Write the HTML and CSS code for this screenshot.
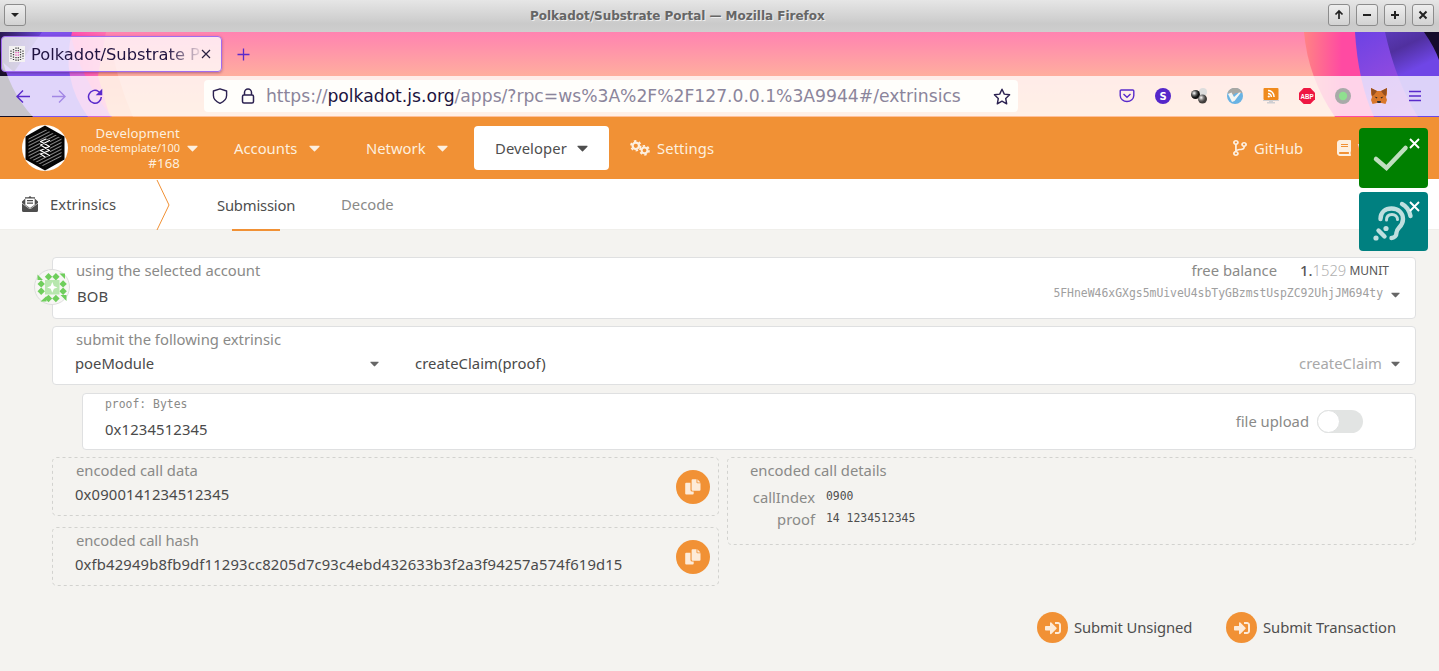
FILE: index.html
```html
<!DOCTYPE html>
<html lang="en">
<head>
<meta charset="utf-8">
<title>Polkadot/Substrate Portal</title>
<link rel="stylesheet" href="styles.css">
</head>
<body>
<svg class="defs" aria-hidden="true">
  <defs>
    <symbol id="caret" viewBox="0 180 320 190"><path d="M31.3 192h257.3c17.8 0 26.7 21.5 14.1 34.1L174.1 354.8c-7.8 7.8-20.5 7.8-28.3 0L17.2 226.1C4.6 213.5 13.5 192 31.3 192z"/></symbol>
    <symbol id="copy" viewBox="0 0 16 16"><path d="M1.200 3.700h4.300v7.300a1.600 1.600 0 0 0 1.600 1.600h1.600v2a1 1 0 0 1-1 1H1.200a1 1 0 0 1-1-1V4.700a1 1 0 0 1 1-1z"/><path d="M7.600.3h3.900v3a1 1 0 0 0 1 1h3v6.500a1 1 0 0 1-1 1H7.600a1 1 0 0 1-1-1V1.300a1 1 0 0 1 1-1zM12.400.3l3.100 3.100h-3.100z"/></symbol>
    <symbol id="signin" viewBox="0 0 512 512"><path d="M416 448h-84c-6.600 0-12-5.400-12-12v-40c0-6.600 5.400-12 12-12h84c17.700 0 32-14.300 32-32V160c0-17.700-14.300-32-32-32h-84c-6.600 0-12-5.400-12-12V76c0-6.600 5.400-12 12-12h84c53 0 96 43 96 96v192c0 53-43 96-96 96zm-47-201L201 79c-15-15-41-4.500-41 17v96H24c-13.300 0-24 10.700-24 24v96c0 13.300 10.700 24 24 24h136v96c0 21.500 26 32 41 17l168-168c9.300-9.400 9.300-24.600 0-34z"/></symbol>
    <linearGradient id="base" x1="0" y1="0" x2="0" y2="1"><stop offset="0" stop-color="#ff83b1"/><stop offset=".52" stop-color="#ffae9e"/><stop offset="1" stop-color="#ffc09a"/></linearGradient>
    <linearGradient id="peach" x1="0" y1="0" x2="0" y2="1"><stop offset="0" stop-color="#ff83b1"/><stop offset=".6" stop-color="#ff9f80"/><stop offset="1" stop-color="#ffb088"/></linearGradient>
    <linearGradient id="pinkfade" x1="0" y1="0" x2="1" y2="0"><stop offset=".65" stop-color="#ff4fb0"/><stop offset="1" stop-color="#ff72b0"/></linearGradient>
    <linearGradient id="hot" x1="0" y1="0" x2="1" y2="0"><stop offset="0" stop-color="#ff8384"/><stop offset=".28" stop-color="#ff4aa2"/></linearGradient>
    <linearGradient id="deep" x1="0" y1="0" x2=".3" y2="1"><stop offset="0" stop-color="#5b3bb8"/><stop offset=".25" stop-color="#50309f"/><stop offset=".55" stop-color="#6f46e6"/></linearGradient>
    <linearGradient id="darkl" x1="0" y1="0" x2="1" y2="0"><stop offset="0" stop-color="#2a1a52"/><stop offset="1" stop-color="#6a42d8"/></linearGradient>
    <linearGradient id="violet" x1="0" y1="0" x2=".6" y2="1"><stop offset="0" stop-color="#6c42e4"/><stop offset="1" stop-color="#a850dc"/></linearGradient>
    <radialGradient id="ball" cx=".35" cy=".35"><stop offset="0" stop-color="#fff"/><stop offset=".6" stop-color="#555"/><stop offset="1" stop-color="#111"/></radialGradient>
  </defs>
</svg>

<div class="titlebar">
  <span class="wm"><svg width="20" height="20"><path d="M6 8h8l-4 4z" fill="#222"/></svg></span>
  <span class="win-title">Polkadot/Substrate Portal — Mozilla Firefox</span>
  <div class="wm-group">
    <span class="wm"><svg width="20" height="20"><path d="M10 14V6M6.500 9.500L10 6l3.500 3.500" fill="none" stroke="#222" stroke-width="1.700"/></svg></span>
    <span class="wm"><svg width="20" height="20"><path d="M6 10h8" stroke="#222" stroke-width="2"/></svg></span>
    <span class="wm"><svg width="20" height="20"><path d="M6 10h8M10 6v8" stroke="#222" stroke-width="2"/></svg></span>
    <span class="wm"><svg width="20" height="20"><path d="M6.500 6.500l7 7M13.500 6.500l-7 7" stroke="#222" stroke-width="2"/></svg></span>
  </div>
</div>

<div class="chrome">
  <svg class="art" width="1439" height="85" viewBox="0 32 1439 85">
    <rect y="32" width="1439" height="85" fill="url(#base)"/>
    <path d="M0 32H108Q116 78 133 117H0z" fill="url(#peach)"/>
    <path d="M0 32H106L98 76 110 117H0z" fill="url(#pinkfade)"/>
    <path d="M0 32H70Q80 78 112 117H0z" fill="#b86cf0" opacity=".6"/>
    <path d="M0 32H72Q60 78 88 117H0z" fill="#7e52ea"/>
    <path d="M0 32H42L14 72 0 60z" fill="url(#darkl)"/>
    <path d="M0 50Q8 90 33 117H0z" fill="#171029"/>
    <path d="M1304 32Q1308 78 1335 117H1439V32z" fill="url(#hot)"/>
    <path d="M1355 32Q1358 82 1374 117H1439V32z" fill="url(#violet)"/>
    <path d="M1385 32Q1396 82 1418 117H1439V32z" fill="url(#deep)"/>
    <path d="M1424 32Q1435 48 1439 60V32z" fill="#150c2c"/>
  </svg>
  <div class="tabstrip">
    <div class="tab">
      <svg class="fav" width="16" height="16" viewBox="0 0 16 16"><rect width="16" height="16" fill="#f4f2f2"/><g fill="none" stroke="#3c3c3c" stroke-width="1.300" stroke-dasharray="1.300 1.200"><path d="M2 4.500v8M4.500 3v11M11.500 3v11M14 4.500v8M7 1.500v4M9.300 1.500v4M7 11v4M9.300 11v4"/></g><path d="M7 6v4.500M9.300 6v4.500" stroke="#e458b8" stroke-width="1.300" stroke-dasharray="1.300 1.200"/></svg>
      <span class="tab-title">Polkadot/Substrate P</span>
      <svg class="tab-x" width="10" height="10"><path d="M1 1l8 8M9 1l-8 8" stroke="#2b2140" stroke-width="1.200"/></svg>
    </div>
    <svg class="newtab" width="13" height="13"><path d="M6.500 .5v12M.5 6.500h12" stroke="#592acb" stroke-width="1.300"/></svg>
  </div>
  <div class="toolbar">
    <div class="navbtns">
      <svg width="16" height="16" fill="none" stroke="#592acb" stroke-width="1.400"><path d="M15 8.500H2M8 2.500L2 8.500l6 6"/></svg>
      <svg class="dim" width="16" height="16" fill="none" stroke="#592acb" stroke-width="1.400"><path d="M1 8.500h13M8 2.500l6 6-6 6"/></svg>
      <svg width="16" height="16" fill="none" stroke="#592acb" stroke-width="1.500"><path d="M14.300 9A6.400 6.400 0 1 1 11.500 3.500l2 1.500"/><path d="M14.500 2.500v4H10.500z" fill="#592acb"/></svg>
    </div>
    <div class="urlbar">
      <svg width="16" height="16" fill="none" stroke="#2b2150" stroke-width="1.400" stroke-linejoin="round"><path d="M8 .8L14.600 3v4.500c0 3.800-3 6.300-6.600 7.800C4.400 13.800 1.400 11.300 1.400 7.500V3z"/></svg>
      <svg class="lock" width="14" height="16" fill="none" stroke="#2b2150" stroke-width="1.500"><rect x="1.500" y="7" width="11" height="8" rx="1.500"/><path d="M3.500 7V4.500a3.500 3.500 0 0 1 7 0V7"/></svg>
      <span class="url">https://<b>polkadot.js.org</b>/apps/?rpc=ws%3A%2F%2F127.0.0.1%3A9944#/extrinsics</span>
      <svg class="star" width="18" height="17" fill="none" stroke="#2b2150" stroke-width="1.400" stroke-linejoin="round"><path d="M9 1.200l2.300 4.900 5.300.7-3.900 3.700 1 5.300L9 13.200l-4.700 2.600 1-5.300L1.400 6.800l5.300-.7z"/></svg>
    </div>
    <div class="exts">
      <svg width="16" height="16" fill="none" stroke="#592acb" stroke-width="1.400"><path d="M2.200 2h11.600a1 1 0 0 1 1 1v4.500a6.800 6 0 0 1-13.600 0V3a1 1 0 0 1 1-1z"/><path d="M4.500 6L8 9.200 11.500 6"/></svg>
      <svg width="16" height="16"><circle cx="8" cy="8" r="8" fill="#5527ca"/><text x="8" y="11.800" class="s-badge">S</text></svg>
      <svg width="16" height="16"><circle cx="12" cy="4" r="4" fill="#ddd"/><circle cx="4.500" cy="6.500" r="4.500" fill="url(#ball)"/><circle cx="11.500" cy="11" r="4.500" fill="url(#ball)" opacity=".8"/></svg>
      <svg width="16" height="16"><circle cx="8" cy="8" r="8" fill="#69b3e4"/><path d="M.5 5A8 8 0 0 1 15.500 5L9 5 6 7z" fill="#a8a7a3"/><path d="M1 6l3.500-1.500L7 9l5-4.500h2L7.500 13 5 14z" fill="#f5f5f2"/></svg>
      <svg width="16" height="16"><rect x=".5" y="0" width="15" height="12" rx="1" fill="#f08a1c"/><path d="M5 2.500a6 6 0 0 1 6 6.500M5 5.500A3.300 3.300 0 0 1 8.300 9" fill="none" stroke="#fff" stroke-width="1.500"/><circle cx="5.800" cy="8.500" r="1.100" fill="#fff"/><path d="M0 12h16v1H0zM6 13h4v1H6zM4 14h8v1.500H4z" fill="#cfcfd2"/></svg>
      <svg class="abp-icon" width="16" height="16"><path d="M4.700 0h6.600L16 4.700v6.600L11.300 16H4.700L0 11.300V4.700z" fill="#ee1742"/><text x="8" y="11" textLength="13" lengthAdjust="spacingAndGlyphs" class="abp">ABP</text></svg>
      <svg width="16" height="16"><circle cx="8" cy="8" r="8" fill="#a9aaa9"/><circle cx="8" cy="8" r="4.200" fill="#8fe08f"/></svg>
      <svg width="16" height="16"><path d="M0 0l6 3h4l6-3v6l-1 3 1 3-1.500 4-4-1H6l-4.500 1L0 12l1-3-1-3z" fill="#d9772a"/><path d="M0 0l6 3-3 4-2 1zM16 0l-6 3 3 4 2 1z" fill="#96501f"/><path d="M6 13h4l-.5 2h-3z" fill="#333"/><path d="M3.500 8.500l3 1-1 1zM12.500 8.500l-3 1 1 1z" fill="#222"/></svg>
      <svg class="burger" width="14" height="16"><path d="M1 3.500h12M1 8h12M1 12.500h12" stroke="#592acb" stroke-width="1.300"/></svg>
    </div>
  </div>
</div>

<header class="menu">
  <svg class="logo" width="46" height="46" viewBox="0 0 46 46"><defs><pattern id="stripes" width="3" height="3" patternUnits="userSpaceOnUse" patternTransform="rotate(-27)"><rect width="3" height="3" fill="#050505"/><rect width="3" height=".75" fill="#b5b5b5"/></pattern></defs><circle cx="23" cy="23" r="23" fill="#fff"/><path d="M23 .5l19.500 11v23L23 45.500 3.500 34.500v-23z" fill="#050505"/><path d="M23 4l16.500 9.300v19.400L23 42 6.500 32.700V13.300z" fill="url(#stripes)"/><path d="M18.500 15h9.500v16h-9.500z" fill="#050505" opacity=".8"/><g fill="none" stroke="#fff" stroke-width="1.200" stroke-linecap="round" stroke-linejoin="round"><path d="M24 14l-5.500 2.500 9 5-9 4 9 5M27.500 15.500l-9 4.500 9 5.500-9 3.500 4.500 3"/></g></svg>
  <div class="chain"><span>Development</span><small>node-template/100</small><span class="blk">#168</span></div>
  <svg class="car chain-car"><use href="#caret"/></svg>
  <nav>
    <a class="item accounts">Accounts<svg class="car"><use href="#caret"/></svg></a>
    <a class="item network">Network<svg class="car"><use href="#caret"/></svg></a>
    <a class="item active">Developer<svg class="car"><use href="#caret"/></svg></a>
    <a class="item settings"><svg width="20" height="16" viewBox="0 0 20 16"><g fill="none" stroke="currentColor"><circle cx="5.800" cy="5.800" r="3.200" stroke-width="2.200"/><circle cx="5.800" cy="5.800" r="4.800" stroke-width="1.800" stroke-dasharray="2.500 2.530"/><circle cx="14.500" cy="10.300" r="2.900" stroke-width="2"/><circle cx="14.500" cy="10.300" r="4.500" stroke-width="1.800" stroke-dasharray="2.350 2.360"/></g></svg>Settings</a>
  </nav>
  <div class="links">
    <a class="item gh"><svg width="14" height="16" viewBox="0 0 384 512" preserveAspectRatio="none" fill="currentColor"><path d="M384 144c0-44.200-35.800-80-80-80s-80 35.800-80 80c0 36.400 24.300 67.100 57.500 76.800-.6 16.100-4.200 28.500-11 36.900-15.400 19.200-49.300 22.400-85.200 25.700-28.200 2.600-57.400 5.400-81.300 16.900v-144c32.500-10.200 56-40.500 56-76.300 0-44.200-35.800-80-80-80S0 35.800 0 80c0 35.800 23.500 66.100 56 76.300v199.300C23.500 365.900 0 396.200 0 432c0 44.200 35.800 80 80 80s80-35.800 80-80c0-34-21.200-63.100-51.200-74.600 3.100-5.200 7.800-9.800 14.900-13.400 16.200-8.200 40.400-10.400 66.100-12.800 42.200-3.900 90-8.400 118.200-43.400 14-17.400 21.100-39.800 21.600-67.900 31.600-10.800 54.400-40.700 54.400-75.900zM80 50c16 0 30 14 30 30s-14 30-30 30-30-14-30-30 14-30 30-30zm0 412c-16 0-30-14-30-30s14-30 30-30 30 14 30 30-14 30-30 30zm224-348c16 0 30 14 30 30s-14 30-30 30-30-14-30-30 14-30 30-30z"/></svg>GitHub</a>
    <a class="item wiki"><svg width="14" height="16" viewBox="0 0 448 512" fill="currentColor"><path d="M448 360V24c0-13.300-10.700-24-24-24H96C43 0 0 43 0 96v320c0 53 43 96 96 96h328c13.300 0 24-10.700 24-24v-16c0-7.500-3.500-14.300-8.900-18.700-4.200-15.400-4.200-59.300 0-74.700 5.400-4.300 8.900-11.100 8.900-18.600zM128 134c0-3.300 2.700-6 6-6h212c3.300 0 6 2.700 6 6v20c0 3.300-2.700 6-6 6H134c-3.300 0-6-2.700-6-6v-20zm0 64c0-3.300 2.700-6 6-6h212c3.300 0 6 2.700 6 6v20c0 3.300-2.700 6-6 6H134c-3.300 0-6-2.700-6-6v-20zm253.400 250H96c-17.700 0-32-14.300-32-32 0-17.600 14.400-32 32-32h285.400c-1.900 17.100-1.900 46.900 0 64z"/></svg>Wiki</a>
  </div>
</header>

<div class="subtabs">
  <svg class="env" width="16" height="16" viewBox="0 0 16 16"><path d="M8 0L6.500 1.200H3v1.500L0 5.500v9A1.500 1.500 0 0 0 1.500 16h13a1.500 1.500 0 0 0 1.500-1.500v-9l-3-2.800V1.200H9.500z" fill="#4e4e4e"/><path d="M3.300 2.600h9.400v6.100L8 12 3.300 8.700z" fill="#fff"/><path d="M5 4.700h6M5 7.200h6" stroke="#4e4e4e" stroke-width="1.200"/><path d="M0 7.200l6.600 4.900a2.400 2.400 0 0 0 2.800 0L16 7.200" fill="none" stroke="#fff" stroke-width=".6"/></svg>
  <span class="sect">Extrinsics</span>
  <svg class="arrow" width="14" height="51"><path d="M1 1l12 25L1 51" fill="none" stroke="#f19135" stroke-width="1"/></svg>
  <a class="sub on">Submission</a>
  <a class="sub decode">Decode</a>
</div>

<main>
  <section class="card account">
    <svg class="ident" width="36" height="36" viewBox="0 0 36 36"><circle cx="18" cy="18" r="17.500" fill="#f7f6f4" stroke="#ddd"/><g fill="#6fce5c"><path d="M3.500 11V5.500L9 11zM31 4.500V10l-5.500-5.500zM32.500 26v6l-6-6zM6.500 32.500h6V27z"/><path id="d" d="M14.500 4l3.700 3.700-3.700 3.700-3.700-3.700z"/><use href="#d" x="7.400"/><use href="#d" y="21.800"/><use href="#d" x="7.400" y="21.800"/><use href="#d" x="-7.300" y="7.200"/><use href="#d" x="-7.300" y="14.500"/><use href="#d" x="14.600" y="7.200"/><use href="#d" x="14.600" y="14.500"/></g><rect x="11" y="11" width="14.500" height="14.500" fill="#b7e7ae"/><path d="M18.300 13l1.600 4 3.600 1.400-3.600 1.400-1.600 4-1.600-4-3.600-1.400 3.600-1.400z" fill="#fff"/></svg>
    <div class="row"><span class="lbl w1">using the selected account</span><span class="lbl bal">free balance</span><span class="amount"><b>1.</b><i>1529</i><em>MUNIT</em></span></div>
    <div class="row second"><span class="val bob">BOB</span><span class="addr mono">5FHneW46xGXgs5mUiveU4sbTyGBzmstUspZC92UhjJM694ty</span><svg class="sel"><use href="#caret"/></svg></div>
  </section>
  <section class="card extrinsic">
    <div class="lbl w2">submit the following extrinsic</div>
    <div class="row ext-row"><span class="val module">poeModule</span><svg class="sel"><use href="#caret"/></svg><span class="val call">createClaim(proof)</span><span class="hint">createClaim</span><svg class="sel"><use href="#caret"/></svg></div>
  </section>
  <section class="card param">
    <div class="param-text"><div class="mono plabel">proof: Bytes</div><div class="val digits">0x1234512345</div></div>
    <span class="lbl upl">file upload</span><span class="toggle"><span class="knob"></span></span>
  </section>
  <div class="outputs">
    <div class="col">
      <section class="out"><svg class="frame"><rect x=".5" y=".5" rx="4"/></svg><div><div class="lbl">encoded call data</div><div class="val digits">0x0900141234512345</div></div><button class="round"><svg width="16" height="16"><use href="#copy"/></svg></button></section>
      <section class="out"><svg class="frame"><rect x=".5" y=".5" rx="4"/></svg><div><div class="lbl w3">encoded call hash</div><div class="val hash">0xfb42949b8fb9df11293cc8205d7c93c4ebd432633b3f2a3f94257a574f619d15</div></div><button class="round"><svg width="16" height="16"><use href="#copy"/></svg></button></section>
    </div>
    <section class="out details"><svg class="frame"><rect x=".5" y=".5" rx="4"/></svg>
      <div class="lbl">encoded call details</div>
      <div class="kv"><span class="lbl">callIndex</span><span class="mono">0900</span><span class="lbl">proof</span><span class="mono">14 1234512345</span></div>
    </section>
  </div>
  <div class="actions">
    <button class="act"><span class="round sm"><svg width="16" height="16"><use href="#signin"/></svg></span><span class="act-text">Submit Unsigned</span></button>
    <button class="act trans"><span class="round sm"><svg width="16" height="16"><use href="#signin"/></svg></span><span class="act-text">Submit Transaction</span></button>
  </div>
</main>

<aside class="toasts">
  <div class="toast ok"><svg width="69" height="60"><path d="M17 31l10.500 9L46.500 20" fill="none" stroke="#bfdfbf" stroke-width="4.500" stroke-linecap="round"/><path d="M51 11l9 9M60 11l-9 9" stroke="#fff" stroke-width="1.900"/></svg></div>
  <div class="toast hear"><svg width="69" height="59"><g fill="none" stroke="#bfdfdf" stroke-width="4.400" stroke-linecap="round"><path d="M21.500 27c0-7 5-10.500 11-10.500 7 0 11.500 4.500 11.500 10.500 0 8-6.500 8.500-6.500 13.500 0 3.500-2.500 5.500-5 5.500"/><path d="M27.500 28c0-4 2.500-5.500 5.500-5.500s5.500 2 5.500 5" stroke-width="3"/><path d="M43 12c5 2.500 7.500 7 8.500 12M19.500 38.500l6 6"/></g><g fill="#bfdfdf"><circle cx="17" cy="46" r="2.600"/><circle cx="27" cy="36.500" r="2.600"/></g><path d="M51 10l9 9M60 10l-9 9" stroke="#fff" stroke-width="1.900"/></svg></div>
</aside>
</body>
</html>
```
FILE: styles.css
```css
* { box-sizing: border-box; }
body { margin: 0; width: 1439px; height: 671px; overflow: hidden; position: relative; background: #f4f3f0; font: 14.8px/20px "Noto Sans", "Open Sans", sans-serif; color: #4e4e4e; }
svg { display: block; flex: none; }
.defs { position: absolute; width: 0; height: 0; }
button { border: 0; background: none; padding: 0; margin: 0; font: inherit; color: inherit; }
span, a { white-space: nowrap; }

/* window title */
.titlebar { height: 32px; padding: 0 5px 0 4px; display: flex; align-items: center; justify-content: space-between; background: linear-gradient(#e6e6e6, #cacaca 75%, #cecece); }
.win-title { flex: 1; padding-left: 504px; font: bold 12px/34px "DejaVu Sans", sans-serif; color: #666; text-shadow: 1px 1px 0 #eee; letter-spacing: -.02px; }
.wm-group { display: flex; gap: 6px; }
.wm { width: 22px; height: 22px; margin-top: -2px; border: 1px solid #8c8c8c; border-radius: 3px; background: linear-gradient(#eee, #d2d2d2); }

/* browser chrome */
.chrome { position: relative; height: 85px; }
.art { position: absolute; left: 0; top: 0; }
.tabstrip { position: relative; height: 44px; display: flex; padding: 4px 0 0 1px; }
.tab { width: 221px; height: 36px; border: 1px solid #a06cf0; border-radius: 4px; background: rgba(255,255,255,.78); box-shadow: 0 1px 3px rgba(80,20,80,.45); display: flex; align-items: center; padding-left: 7px; }
.tab-title { width: 170px; margin: 1px 0 0 5px; padding-left: 1px; font: 16.3px/36px "DejaVu Sans", sans-serif; color: #201340; -webkit-mask-image: linear-gradient(90deg, #000 80%, rgba(0,0,0,.1) 100%); mask-image: linear-gradient(90deg, #000 80%, rgba(0,0,0,.1) 100%); }
.tab-x { margin-left: 1px; }
.newtab { margin: 12px 0 0 15px; }
.toolbar { position: relative; height: 40px; background: rgba(255,255,255,.76); display: flex; align-items: center; padding-left: 15px; }
.navbtns { display: flex; gap: 20px; width: 189px; }
.dim { opacity: .45; }
.urlbar { width: 814px; height: 32px; border-radius: 4px; background: rgba(255,255,252,.93); display: flex; align-items: center; padding-left: 8px; }
.lock { margin-left: 13px; }
.url { width: 727px; margin-left: 11px; font: 17.2px/32px "DejaVu Sans", sans-serif; color: #8b859b; letter-spacing: -.02px; }
.url b { font-weight: 400; color: #201340; }
.exts { display: flex; gap: 20px; margin-left: 101px; }
.burger { margin-left: 1px; }
.s-badge { font: bold 10px "DejaVu Sans", sans-serif; fill: #fff; text-anchor: middle; }
.abp-icon { overflow: visible; }
.abp { font: bold 8px "Liberation Sans", sans-serif; fill: #fff; text-anchor: middle; }

/* portal menu */
.menu { height: 62px; background: #f19135; color: #fdefdf; display: flex; align-items: center; padding-left: 22px; }
.chain { width: 112px; text-align: right; display: flex; flex-direction: column; line-height: 15px; font-size: 13.2px; }
.chain span { letter-spacing: .12px; }
.chain small { font-size: 11px; line-height: 14px; white-space: nowrap; }
.blk { line-height: 16px; }
.car { width: 11px; height: 7px; fill: currentColor; }
.chain-car { margin-left: 7px; }
nav { display: flex; margin-left: 36px; height: 44px; }
.item { display: flex; align-items: center; height: 44px; }
.item .car { margin: 1px 0 0 auto; }
.accounts { width: 85.500px; }
.network { width: 82px; margin-left: 46.500px; }
.active { width: 135px; margin-left: 26px; padding: 0 21px; background: #fff; color: #4e4e4e; border-radius: 4px; letter-spacing: .1px; }
.settings { margin-left: 21px; gap: 7px; letter-spacing: .1px; }
.links { margin-left: auto; display: flex; width: 206px; }
.gh { width: 104px; gap: 7px; }
.wiki { gap: 7px; }

/* section tabs */
.subtabs { height: 51px; border-bottom: 1px solid #f0efeb; background: #fff; display: flex; align-items: center; padding-left: 22px; }
.sect { width: 106px; margin-left: 12px; letter-spacing: .05px; }
.arrow { width: 14px; }
.sub { height: 52px; line-height: 52px; }
.on { width: 78px; margin: 0 0 -1px 47px; letter-spacing: -.2px; background: linear-gradient(#f19135, #f19135) center bottom / 48px 2px no-repeat; }
.decode { margin-left: 46px; color: #8a8a88; }

/* form */
main { padding: 27px 23px 0 52px; }
.lbl { color: #8a8a88; line-height: 20px; }
.val { color: #4a4a4a; }
.digits { letter-spacing: .15px; }
.mono { font-family: "DejaVu Sans Mono", monospace; font-size: 11.42px; }
.row { display: flex; align-items: center; height: 20px; }
.card { position: relative; background: #fff; border: 1px solid #dfe0e1; border-radius: 4px; padding: 2px 15px 0 23px; }
.sel { width: 9px; height: 6px; fill: #666; margin-top: 1px; }
.account { height: 62px; }
.ident { position: absolute; left: -19px; top: 11px; }
.w1 { letter-spacing: -.04px; }
.bal { margin-left: auto; }
.amount { width: 89px; margin: 0 11px 0 23px; display: flex; }
.amount b { font-weight: 500; color: #555; }
.amount i { font-style: normal; font-weight: 300; color: #b0b0b0; }
.amount em { font-style: normal; font-size: 12px; line-height: 22px; height: 20px; margin-left: auto; color: #555; }
.second { margin-top: 6px; }
.bob { margin-left: 1px; letter-spacing: .2px; }
.addr { margin: -6px 8px 0 auto; color: #a0a0a0; }
.second .sel { margin: -3px 0 0; }
.extrinsic { height: 59px; margin-top: 7px; }
.ext-row { margin-top: 4px; }
.module { width: 295px; margin-left: -1px; }
.call { margin-left: 36px; letter-spacing: .05px; }
.hint { margin-left: auto; margin-right: 9px; color: #a8a8a8; letter-spacing: .05px; }
.param { height: 57px; margin: 8px 0 0 30px; display: flex; align-items: flex-start; padding: 0 52px 0 22px; }
.param-text { flex: 1; }
.plabel { color: #8a8a88; line-height: 20px; margin-bottom: 5px; }
.upl { margin-top: 17px; }
.toggle { width: 46px; height: 23px; border-radius: 12px; background: #e2e4e3; margin: 16px 0 0 8px; }
.knob { display: block; width: 23px; height: 23px; border: 1px solid #dfe1e1; border-radius: 50%; background: #fff; }
.outputs { display: flex; align-items: flex-start; gap: 8px; margin-top: 7px; }
.col { width: 667px; display: flex; flex-direction: column; gap: 11px; }
.out { position: relative; height: 59px; padding: 3px 9px 0 24px; display: flex; justify-content: space-between; }
.frame { position: absolute; left: 0; top: 0; width: 100%; height: 100%; }
.frame rect { width: calc(100% - 1px); height: calc(100% - 1px); fill: none; stroke: #d2d2cf; stroke-dasharray: 3 3; }
.out .val { margin: 4px 0 0 -1px; }
.w3 { letter-spacing: -.1px; }
.hash { letter-spacing: .15px; }
.round { position: relative; flex: none; width: 34px; height: 34px; border-radius: 50%; background: #f19135; fill: #fdebd9; display: flex; align-items: center; justify-content: center; margin-top: 10px; }
.details { display: block; flex: 1; height: 88px; padding-left: 23px; }
.kv { display: grid; grid-template-columns: 65px auto; column-gap: 11px; row-gap: 2px; margin-top: 7px; }
.kv .lbl { text-align: right; }
.kv .mono { line-height: 18px; }
.actions { display: flex; margin: 26px 0 0 985px; }
.act { display: flex; align-items: center; width: 155px; gap: 6px; letter-spacing: -.1px; }
.act-text { margin-top: -2px; }
.trans { width: 170px; margin-left: 34px; letter-spacing: -.04px; }
.sm { width: 31px; height: 31px; margin: 0; }

/* notifications */
.toasts { position: absolute; left: 1359px; top: 128px; display: grid; gap: 4px; }
.toast { width: 69px; height: 60px; border-radius: 4px; }
.ok { background: #008000; }
.hear { height: 59px; background: #008080; }
```
